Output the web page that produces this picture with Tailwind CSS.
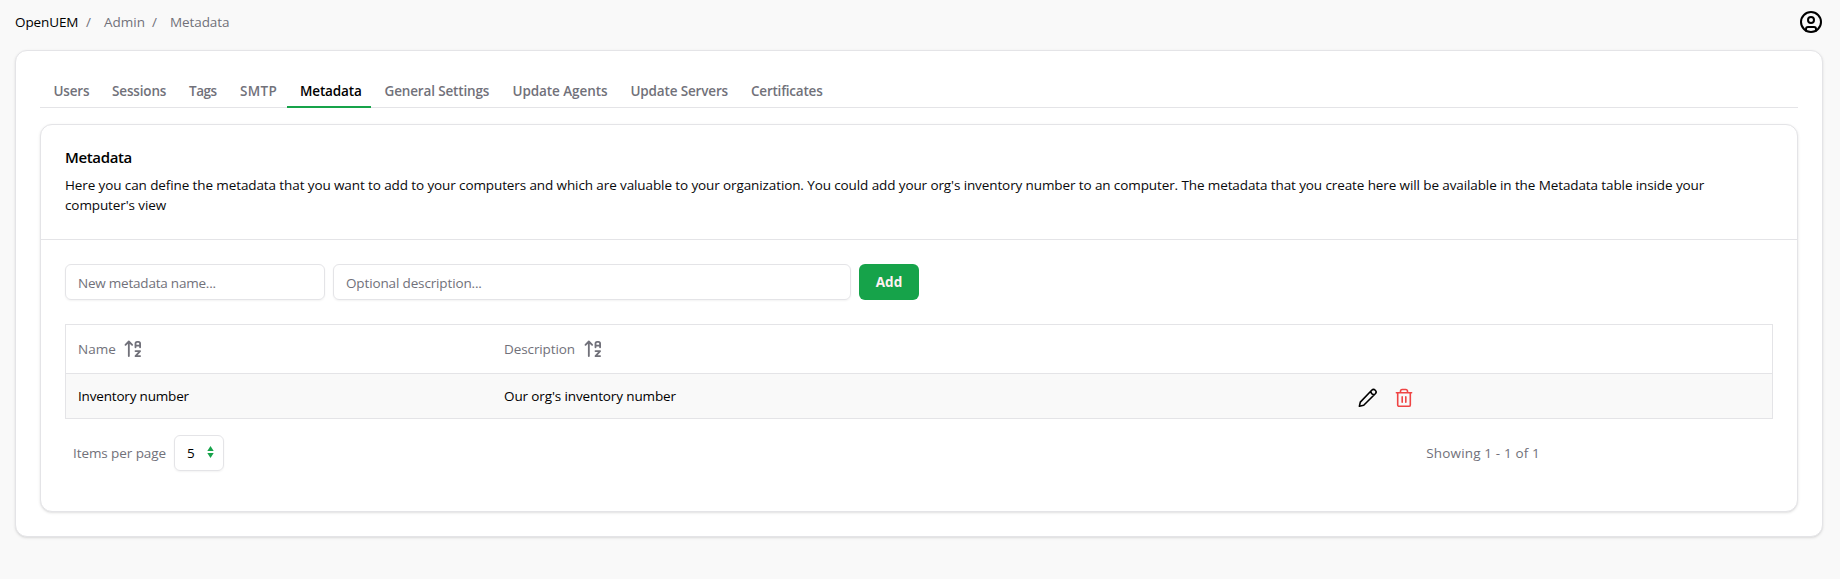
<!DOCTYPE html>
<html lang="en">
<head>
<meta charset="utf-8">
<title>OpenUEM | Admin</title>
<script src="https://cdn.jsdelivr.net/npm/@tailwindcss/browser@4"></script>
</head>
<body class="h-[579px] overflow-hidden bg-[#f9f9f9] font-['Open_Sans','Noto_Sans',sans-serif] text-[13.5px] leading-5 text-[#09090b]">
<header class="flex h-[50px] items-center justify-between pt-0 pr-[17px] pb-[6px] pl-[15px]">
  <nav class="flex text-[#71717a]">
    <a class="w-[71px] tracking-[-0.1px] text-black">OpenUEM</a><span class="w-[18px]">/</span>
    <a class="w-[48px]">Admin</a><span class="w-[18px]">/</span>
    <span class="tracking-[-0.1px]">Metadata</span>
  </nav>
  <svg class="size-6 text-black" viewBox="0 0 24 24" fill="none" stroke="currentColor" stroke-width="2" stroke-linecap="round" stroke-linejoin="round"><circle cx="12" cy="12" r="10"/><circle cx="12" cy="10" r="3"/><path d="M7 20.662V19a2 2 0 0 1 2-2h6a2 2 0 0 1 2 2v1.662"/></svg>
</header>
<main class="mr-[17px] ml-[15px] h-[487px] rounded-xl border border-[#e4e4e7] bg-white px-6 pt-6 shadow-sm">
  <ul class="flex h-[33px] border-b border-[#e4e4e7] font-semibold text-[#71717a]">
    <li class="w-[59px] pt-[6px] pl-[13.5px] tracking-[-0.2px]">Users</li>
    <li class="w-[77px] pt-[6px] pl-[13px] tracking-[-0.15px]">Sessions</li>
    <li class="w-[51px] pt-[6px] pl-[13px] tracking-[-0.45px]">Tags</li>
    <li class="w-[60px] pt-[6px] pl-[13px] tracking-[0.3px]">SMTP</li>
    <li class="h-[33px] w-[84px] border-b-2 border-[#16a34a] pt-[6px] pl-[13px] tracking-[-0.15px] text-black">Metadata</li>
    <li class="w-[128px] pt-[6px] pl-[13.5px] tracking-[-0.15px]">General Settings</li>
    <li class="w-[118px] pt-[6px] pl-[13.5px] tracking-[-0.08px]">Update Agents</li>
    <li class="w-[121px] pt-[6px] pl-[13.5px] tracking-[-0.16px]">Update Servers</li>
    <li class="pt-[6px] pl-[13px] tracking-[-0.22px]">Certificates</li>
  </ul>
  <section class="mt-4 h-[388px] rounded-xl border border-[#e4e4e7] bg-white shadow-sm">
    <div class="h-[115px] border-b border-[#e4e4e7] px-6 pt-[22px]">
      <h3 class="text-[15px] font-semibold tracking-[-0.35px] text-black">Metadata</h3>
      <p class="mt-2 tracking-[-0.106px]">Here you can define the metadata that you want to add to your computers and which are valuable to your organization. You could add your org's inventory number to an computer. The metadata that you create here will be available in the Metadata table inside your<br>computer's view</p>
    </div>
    <div class="px-6 pt-6">
      <div class="flex gap-2">
        <div class="flex h-9 w-[260px] items-center rounded-md border border-[#e4e4e7] px-3 pt-[2px] tracking-[-0.22px] text-[#71717a] shadow-xs">New metadata name...</div>
        <div class="flex h-9 w-[518px] items-center rounded-md border border-[#e4e4e7] px-3 pt-[2px] tracking-[-0.14px] text-[#71717a] shadow-xs">Optional description...</div>
        <button class="h-9 w-[60px] rounded-md bg-[#16a34a] text-[13.5px] font-bold text-[#fff1f2]">Add</button>
      </div>
      <div class="mt-6 border border-[#e4e4e7]">
        <div class="flex h-[49px] items-center border-b border-[#e4e4e7] pl-3 text-[#71717a]">
          <div class="flex w-[426px] items-center gap-[7px]">Name
            <svg class="size-5" viewBox="0 0 24 24" fill="none" stroke="currentColor" stroke-width="2.2" stroke-linecap="round" stroke-linejoin="round"><path d="m3 7 4-4 4 4M7 3v17.500M20.500 8H15M15 10V5.500a2 2 0 0 1 2-2h1.500a2 2 0 0 1 2 2V10M15 14.500h5.500l-5.500 6h5.500"/></svg></div>
          <div class="flex items-center gap-[8px] tracking-[-0.1px]">Description
            <svg class="size-5" viewBox="0 0 24 24" fill="none" stroke="currentColor" stroke-width="2.2" stroke-linecap="round" stroke-linejoin="round"><path d="m3 7 4-4 4 4M7 3v17.500M20.500 8H15M15 10V5.500a2 2 0 0 1 2-2h1.500a2 2 0 0 1 2 2V10M15 14.500h5.500l-5.500 6h5.500"/></svg></div>
        </div>
        <div class="flex h-11 items-center bg-[#f9f9f9] pl-3 text-black">
          <div class="w-[426px] tracking-[-0.18px]">Inventory number</div>
          <div class="w-[854px] tracking-[-0.12px]">Our org's inventory number</div>
          <div class="flex gap-[16px] pt-[4px]">
            <svg class="size-5" viewBox="0 0 20 20" fill="none" stroke="currentColor" stroke-width="1.6" stroke-linejoin="round"><path d="M1.4 18.200l.9-4.100L13.700 2.300a2.500 2.500 0 0 1 3.600 3.500L5.700 17.200zM12.800 3.500c.2 2 1.200 3 3.300 3.300"/></svg>
            <svg class="size-5" viewBox="0 0 20 20" fill="none" stroke="#ef4444" stroke-width="1.6" stroke-linejoin="round" stroke-linecap="round"><path d="M2.400 4.700h15.200M6.500 4.500V3.200a1.700 1.700 0 0 1 1.700-1.700h3.600a1.700 1.700 0 0 1 1.700 1.700v1.300M3.700 4.900v12a1.400 1.400 0 0 0 1.400 1.400h9.800a1.400 1.400 0 0 0 1.400-1.400v-12M8.200 8.900v5.300M11.800 8.900v5.300"/></svg>
          </div>
        </div>
      </div>
      <div class="mt-4 flex h-9 items-center justify-between pr-[233px] pl-2 text-[#71717a]">
        <div class="flex items-center gap-[7px]"><span class="w-[94px] tracking-[-0.08px] whitespace-nowrap">Items per page</span>
          <div class="flex h-9 w-[50px] items-center justify-between rounded-md border border-[#e4e4e7] pr-[9px] pl-3 text-black shadow-xs">5
            <svg class="mb-[2px] h-3 w-[7px]" viewBox="0 0 7 12" fill="#16a34a"><path d="M3.500 0L6.700 5H.3zM3.500 12L.3 7h6.400z"/></svg></div>
        </div>
        <span class="tracking-[0.15px]">Showing 1 - 1 of 1</span>
      </div>
    </div>
  </section>
</main>
</body>
</html>
